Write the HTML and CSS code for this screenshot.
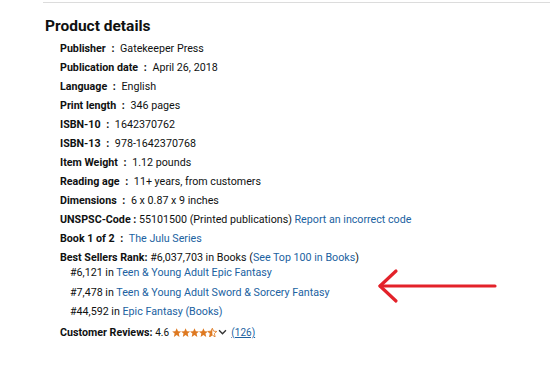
FILE: index.html
```html
<!DOCTYPE html>
<html>
<head>
<meta charset="utf-8">
<link rel="stylesheet" href="styles.css">
</head>
<body>
<div class="section">
  <h2 class="title">Product details</h2>
  <ul class="details">
    <li><span class="lbl">Publisher <span class="sep">:</span></span> Gatekeeper Press</li>
    <li><span class="lbl">Publication date <span class="sep">:</span></span> April 26, 2018</li>
    <li><span class="lbl">Language <span class="sep">:</span></span> English</li>
    <li><span class="lbl">Print length <span class="sep">:</span></span> 346 pages</li>
    <li><span class="lbl">ISBN-10 <span class="sep">:</span></span> 1642370762</li>
    <li><span class="lbl">ISBN-13 <span class="sep">:</span></span> 978-1642370768</li>
    <li><span class="lbl">Item Weight <span class="sep">:</span></span> 1.12 pounds</li>
    <li><span class="lbl">Reading age <span class="sep">:</span></span> 11+ years, from customers</li>
    <li><span class="lbl">Dimensions <span class="sep">:</span></span> 6 x 0.87 x 9 inches</li>
    <li><span class="lbl">UNSPSC-Code :</span> 55101500 (Printed publications) <a class="link">Report an incorrect code</a></li>
    <li><span class="lbl">Book 1 of 2 <span class="sep">:</span></span> <a class="link">The Julu Series</a></li>
    <li class="rank"><span class="lbl">Best Sellers Rank:</span> #6,037,703 in Books (<a class="link">See Top 100 in Books</a>)
      <ul class="sub">
        <li>#6,121 in <a class="link">Teen &amp; Young Adult Epic Fantasy</a></li>
        <li>#7,478 in <a class="link">Teen &amp; Young Adult Sword &amp; Sorcery Fantasy</a></li>
        <li class="last">#44,592 in <a class="link">Epic Fantasy (Books)</a></li>
      </ul>
    </li>
    <li class="reviews"><span class="lbl">Customer Reviews:</span> <span class="score">4.6</span>
      <span class="stars">
        <svg width="45" height="9.5" viewBox="0 0 48 10">
          <g fill="#de7921">
            <polygon points="5,0.2 6.4,3.3 9.8,3.6 7.2,5.8 8,9.4 5,7.5 2,9.4 2.8,5.8 0.2,3.6 3.6,3.3"/>
            <polygon transform="translate(9.5 0)" points="5,0.2 6.4,3.3 9.8,3.6 7.2,5.8 8,9.4 5,7.5 2,9.4 2.8,5.8 0.2,3.6 3.6,3.3"/>
            <polygon transform="translate(19 0)" points="5,0.2 6.4,3.3 9.8,3.6 7.2,5.8 8,9.4 5,7.5 2,9.4 2.8,5.8 0.2,3.6 3.6,3.3"/>
            <polygon transform="translate(28.5 0)" points="5,0.2 6.4,3.3 9.8,3.6 7.2,5.8 8,9.4 5,7.5 2,9.4 2.8,5.8 0.2,3.6 3.6,3.3"/>
          </g>
          <g transform="translate(38 0)">
            <polygon points="5,0.2 6.4,3.3 9.8,3.6 7.2,5.8 8,9.4 5,7.5 2,9.4 2.8,5.8 0.2,3.6 3.6,3.3" fill="none" stroke="#de7921" stroke-width="0.9"/>
            <polygon points="5,0.2 5,7.5 2,9.4 2.8,5.8 0.2,3.6 3.6,3.3" fill="#de7921"/>
          </g>
        </svg>
        <svg class="chev" width="9" height="6" viewBox="0 0 10 7"><polyline points="1,1.5 5,5.5 9,1.5" fill="none" stroke="#333" stroke-width="1.6"/></svg>
      </span>
      <a class="link count">(126)</a>
    </li>
  </ul>
  <svg class="arrow" width="126" height="40" viewBox="0 0 126 40">
    <g fill="none" stroke="#e3222a" stroke-width="3.2" stroke-linecap="round" stroke-linejoin="round">
      <line x1="3" y1="20" x2="118" y2="20"/>
      <polyline points="19,5 3,20 19,35"/>
    </g>
  </svg>
</div>
</body>
</html>
```

FILE: styles.css
```css
html, body {
  margin: 0;
  padding: 0;
  background: #fff;
}
body {
  font-family: Roboto, "Liberation Sans", Arial, sans-serif;
  color: #0f1111;
  font-size: 10.7px;
}
.section {
  position: relative;
  margin: 2px 0 0 43px;
  border-top: 1px solid #dcdcdc;
  padding-top: 13px;
}
.title {
  margin: 0 0 0 2px;
  font-size: 15.5px;
  font-weight: 700;
  line-height: 20px;
}
.details {
  list-style: none;
  margin: 3px 0 0 0;
  padding: 0 0 0 17px;
}
.details > li {
  line-height: 19px;
  white-space: nowrap;
}
.lbl {
  font-weight: 700;
}
.sep {
  margin: 0 3px;
}
.link {
  color: #2162a1;
  text-decoration: none;
}
.sub {
  list-style: none;
  margin: -4px 0 0 0;
  padding: 0 0 0 10px;
}
.sub li {
  line-height: 19px;
}
.sub li + li {
  margin-top: 1px;
}
.sub li.last {
  margin-top: 0;
}
.reviews {
  margin-top: 2px;
}
.score {
  font-size: 10px;
}
.stars {
  display: inline-flex;
  align-items: center;
  gap: 1px;
  vertical-align: -1px;
}
.count {
  font-size: 10px;
  text-decoration: underline;
  margin-left: 2px;
}
.arrow {
  position: absolute;
  left: 334px;
  top: 263px;
}
```
